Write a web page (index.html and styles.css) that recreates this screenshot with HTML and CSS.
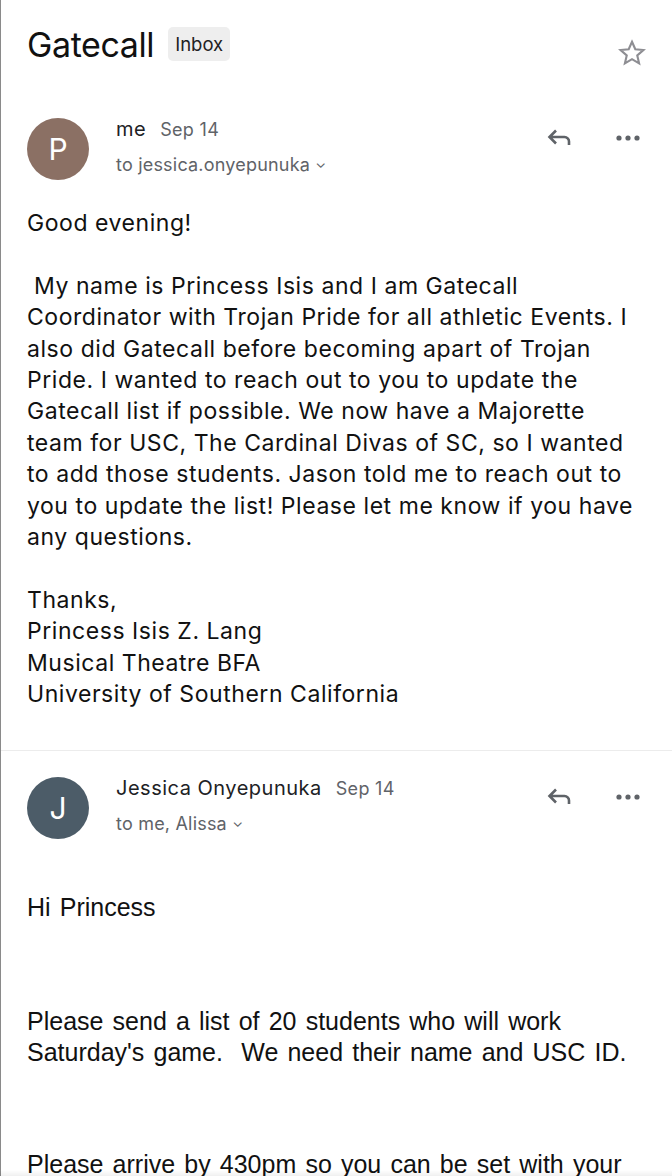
FILE: index.html
```html
<!DOCTYPE html>
<html lang="en">
<head>
<meta charset="utf-8">
<title>Gatecall</title>
<link rel="stylesheet" href="styles.css">
</head>
<body>
<div class="page">
  <header class="subject">
    <h1 class="subject-title">Gatecall</h1>
    <span class="label">Inbox</span>
    <svg class="star" viewBox="0 0 24 24" width="32" height="32" aria-hidden="true">
      <path d="M12 3.6l2.47 5.6 6.08.56-4.6 4.02 1.36 5.96L12 16.62l-5.31 3.12 1.36-5.96-4.6-4.02 6.08-.56z" fill="none" stroke="#8e8e93" stroke-width="1.6" stroke-linejoin="miter"/>
    </svg>
  </header>

  <article class="message">
    <div class="msg-head">
      <div class="avatar avatar-p">P</div>
      <div class="meta">
        <div class="from"><span class="sender">me</span><span class="date">Sep 14</span></div>
        <div class="to">to jessica.onyepunuka <span class="caret">&#8964;</span></div>
      </div>
      <div class="actions">
        <svg class="reply" viewBox="0 0 32 32" width="32" height="32" aria-hidden="true">
          <path d="M12 8.5L5.5 15l6.5 6.5M6 15h14.5a4.5 4.5 0 0 1 4.5 4.5v3.5" fill="none" stroke="#5f6368" stroke-width="2.6" stroke-linecap="butt" stroke-linejoin="miter"/>
        </svg>
        <svg class="more" viewBox="0 0 32 32" width="32" height="32" aria-hidden="true">
          <circle cx="7" cy="16" r="2.6" fill="#5f6368"/>
          <circle cx="16" cy="16" r="2.6" fill="#5f6368"/>
          <circle cx="25" cy="16" r="2.6" fill="#5f6368"/>
        </svg>
      </div>
    </div>
    <div class="body body-a">
      <p>Good evening!</p>
      <p>&nbsp;My name is Princess Isis and I am Gatecall Coordinator with Trojan Pride for all athletic Events. I also did Gatecall before becoming apart of Trojan Pride. I wanted to reach out to you to update the Gatecall list if possible. We now have a Majorette team for USC, The Cardinal Divas of SC, so I wanted to add those students. Jason told me to reach out to you to update the list! Please let me know if you have any questions.</p>
      <p>Thanks,<br>Princess Isis Z. Lang<br>Musical Theatre BFA<br>University of Southern California</p>
    </div>
  </article>

  <article class="message message-next">
    <div class="msg-head">
      <div class="avatar avatar-j">J</div>
      <div class="meta">
        <div class="from"><span class="sender">Jessica Onyepunuka</span><span class="date">Sep 14</span></div>
        <div class="to">to me, Alissa <span class="caret">&#8964;</span></div>
      </div>
      <div class="actions">
        <svg class="reply" viewBox="0 0 32 32" width="32" height="32" aria-hidden="true">
          <path d="M12 8.5L5.5 15l6.5 6.5M6 15h14.5a4.5 4.5 0 0 1 4.5 4.5v3.5" fill="none" stroke="#5f6368" stroke-width="2.6" stroke-linecap="butt" stroke-linejoin="miter"/>
        </svg>
        <svg class="more" viewBox="0 0 32 32" width="32" height="32" aria-hidden="true">
          <circle cx="7" cy="16" r="2.6" fill="#5f6368"/>
          <circle cx="16" cy="16" r="2.6" fill="#5f6368"/>
          <circle cx="25" cy="16" r="2.6" fill="#5f6368"/>
        </svg>
      </div>
    </div>
    <div class="body body-b">
      <p>Hi Princess</p>
      <p class="gap">Please send a list of 20 students who will work Saturday's game.&nbsp; We need their name and USC ID.</p>
      <p class="gap gap-last">Please arrive by 430pm so you can be set with your</p>
    </div>
  </article>
</div>
<div class="fade"></div>
</body>
</html>
```

FILE: styles.css
```css
html, body {
  margin: 0;
  padding: 0;
  background: #ffffff;
}

body {
  width: 672px;
  height: 1176px;
  overflow: hidden;
  font-family: "Inter", "Liberation Sans", sans-serif;
  color: #1f1f1f;
  box-sizing: border-box;
  border-left: 1px solid #8a8a8a;
}

.page {
  display: flex;
  flex-direction: column;
}

/* subject row */
.subject {
  display: flex;
  align-items: center;
  padding: 24px 24px 0 26px;
  height: 40px;
}

.subject-title {
  margin: 0;
  font-size: 34px;
  font-weight: 400;
  letter-spacing: -0.4px;
  color: #111;
}

.label {
  margin-left: 14px;
  background: #eeeeee;
  border-radius: 5px;
  padding: 6px 7px;
  font-size: 18.5px;
  color: #222;
}

.star {
  margin-left: auto;
  margin-top: 18px;
}

/* message header */
.message {
  padding: 0 0 0 26px;
}

.msg-head {
  display: flex;
  align-items: flex-start;
  padding-top: 53px;
}

.message-next {
  border-top: 1px solid #ececec;
  margin-top: 8px;
}

.message-next .msg-head {
  padding-top: 25px;
}

.avatar {
  width: 62px;
  height: 62px;
  border-radius: 50%;
  color: #fff;
  display: flex;
  align-items: center;
  justify-content: center;
  font-size: 30px;
  flex: none;
  margin-top: 1px;
}

.avatar-p { background: #8b7064; }
.avatar-j { background: #4c5c68; }

.meta {
  margin-left: 27px;
  flex: 1;
}

.from {
  display: flex;
  align-items: baseline;
  gap: 14px;
}

.sender {
  font-size: 20px;
  letter-spacing: 0.5px;
  color: #202124;
}

.date {
  font-size: 18px;
  letter-spacing: 0.3px;
  color: #5f6368;
}

.to {
  margin-top: 13px;
  font-size: 18px;
  letter-spacing: 0.2px;
  color: #5f6368;
}

.caret {
  font-size: 14px;
  position: relative;
  top: -3px;
}

.actions {
  display: flex;
  gap: 36px;
  padding-right: 28px;
  padding-top: 5px;
}

/* message bodies */
.body {
  padding-right: 24px;
  font-size: 23px;
  line-height: 31.4px;
  letter-spacing: 0.55px;
  color: #111;
}

.body p {
  margin: 0 0 31.4px;
}

.body-a {
  margin-top: 28px;
}

.body-b {
  margin-top: 53px;
  font-family: "Liberation Sans", sans-serif;
  font-size: 25px;
  letter-spacing: 0;
  word-spacing: 2.2px;
  line-height: 31px;
}

.body-b p.gap {
  margin-top: 83px;
  margin-bottom: 0;
}

.body-b p.gap-last {
  margin-top: 81px;
}

.fade {
  position: fixed;
  left: 0;
  right: 0;
  bottom: 0;
  height: 6px;
  background: linear-gradient(to bottom, rgba(0,0,0,0), rgba(0,0,0,0.06));
}
```
